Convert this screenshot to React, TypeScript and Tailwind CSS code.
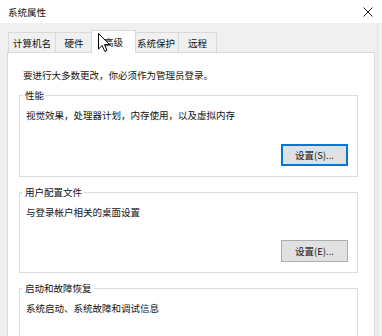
import React from "react";

const font = {
  fontFamily: '"Noto Sans CJK SC", "Noto Sans", sans-serif',
};

function Tab({ label, w, selected }: { label: string; w: string; selected?: boolean }) {
  if (selected) {
    return (
      <div
        className={`relative z-10 -mb-px -mx-[2px] h-[23px] ${w} border border-b-0 border-[#d9d9d9] bg-white flex items-center justify-center text-[9.5px] leading-[12px] text-[#111]`}
      >
        {label}
      </div>
    );
  }
  return (
    <div
      className={`h-[20px] ${w} border border-b-0 border-[#d9d9d9] bg-[#f0f0f0] flex items-center justify-center text-[9.5px] leading-[12px] text-[#111] -ml-px first:ml-0`}
    >
      {label}
    </div>
  );
}

function Group({
  title,
  desc,
  button,
  focused,
  btnMt,
  mt,
}: {
  title: string;
  desc: string;
  button?: string;
  focused?: boolean;
  btnMt?: string;
  mt: string;
}) {
  return (
    <fieldset className={`${mt} ml-[11px] w-[339px] border border-[#dcdcdc] min-w-0`}>
      <legend className="ml-[3px] px-[2px] text-[9.5px] leading-[12px] text-[#111]">{title}</legend>
      <div className="flex flex-col pb-[10px]">
        <div className="mt-[8px] pl-[6px] text-[9.5px] leading-[12px] text-[#111]">{desc}</div>
        {button ? (
          <button
            className={`${btnMt} self-end mr-[9px] w-[67px] h-[22px] bg-[#e1e1e1] text-[9.5px] leading-[12px] text-[#111] flex items-center justify-center ${
              focused
                ? "border border-[#0078d7] shadow-[inset_0_0_0_1px_#0078d7]"
                : "border border-[#adadad]"
            }`}
          >
            {button}
          </button>
        ) : (
          <div className="h-[40px]" />
        )}
      </div>
    </fieldset>
  );
}

export default function App() {
  return (
    <div className="relative w-[382px] h-[336px] overflow-hidden bg-[#f0f0f0]" style={font}>
      {/* Title bar */}
      <div className="h-[23px] bg-white flex items-center justify-between pl-[8px] pr-[8px]">
        <span className="text-[9.5px] leading-[12px] text-[#111]">系统属性</span>
        <svg width="10" height="10" viewBox="0 0 10 10" className="mr-[1px]">
          <path d="M0.5 0.5 L9.5 9.5 M9.5 0.5 L0.5 9.5" stroke="#222" strokeWidth="1" />
        </svg>
      </div>

      {/* Tabs */}
      <div className="mt-[7px] pl-[8px] h-[22px] flex items-end">
        <Tab label="计算机名" w="w-[48px]" />
        <Tab label="硬件" w="w-[38px]" />
        <Tab label="高级" w="w-[45px]" selected />
        <Tab label="系统保护" w="w-[46px]" />
        <Tab label="远程" w="w-[39px]" />
      </div>

      {/* Panel */}
      <div className="ml-[7px] w-[368px] h-[300px] border border-[#d9d9d9] bg-white pt-[16px]">
        <div className="pl-[15px] text-[9.5px] leading-[12px] text-[#111]">
          要进行大多数更改，你必须作为管理员登录。
        </div>
        <Group
          mt="mt-[8px]"
          title="性能"
          desc="视觉效果，处理器计划，内存使用，以及虚拟内存"
          button="设置(S)..."
          focused
          btnMt="mt-[23px]"
        />
        <Group
          mt="mt-[9px]"
          title="用户配置文件"
          desc="与登录帐户相关的桌面设置"
          button="设置(E)..."
          btnMt="mt-[22px]"
        />
        <Group mt="mt-[9px]" title="启动和故障恢复" desc="系统启动、系统故障和调试信息" />
      </div>

      {/* Window right edge */}
      <div className="absolute top-[23px] right-[4px] bottom-0 w-px bg-[#e3e3e3]" />

      {/* Mouse cursor */}
      <svg
        className="absolute z-20 left-[98px] top-[33px]"
        width="13"
        height="20"
        viewBox="0 0 13 20"
      >
        <path
          d="M0.5 0.5 L0.5 16 L4.2 12.5 L6.8 18.5 L9 17.5 L6.5 11.6 L11.5 11.6 Z"
          fill="#fff"
          stroke="#000"
          strokeWidth="1"
          strokeLinejoin="miter"
        />
      </svg>
    </div>
  );
}
